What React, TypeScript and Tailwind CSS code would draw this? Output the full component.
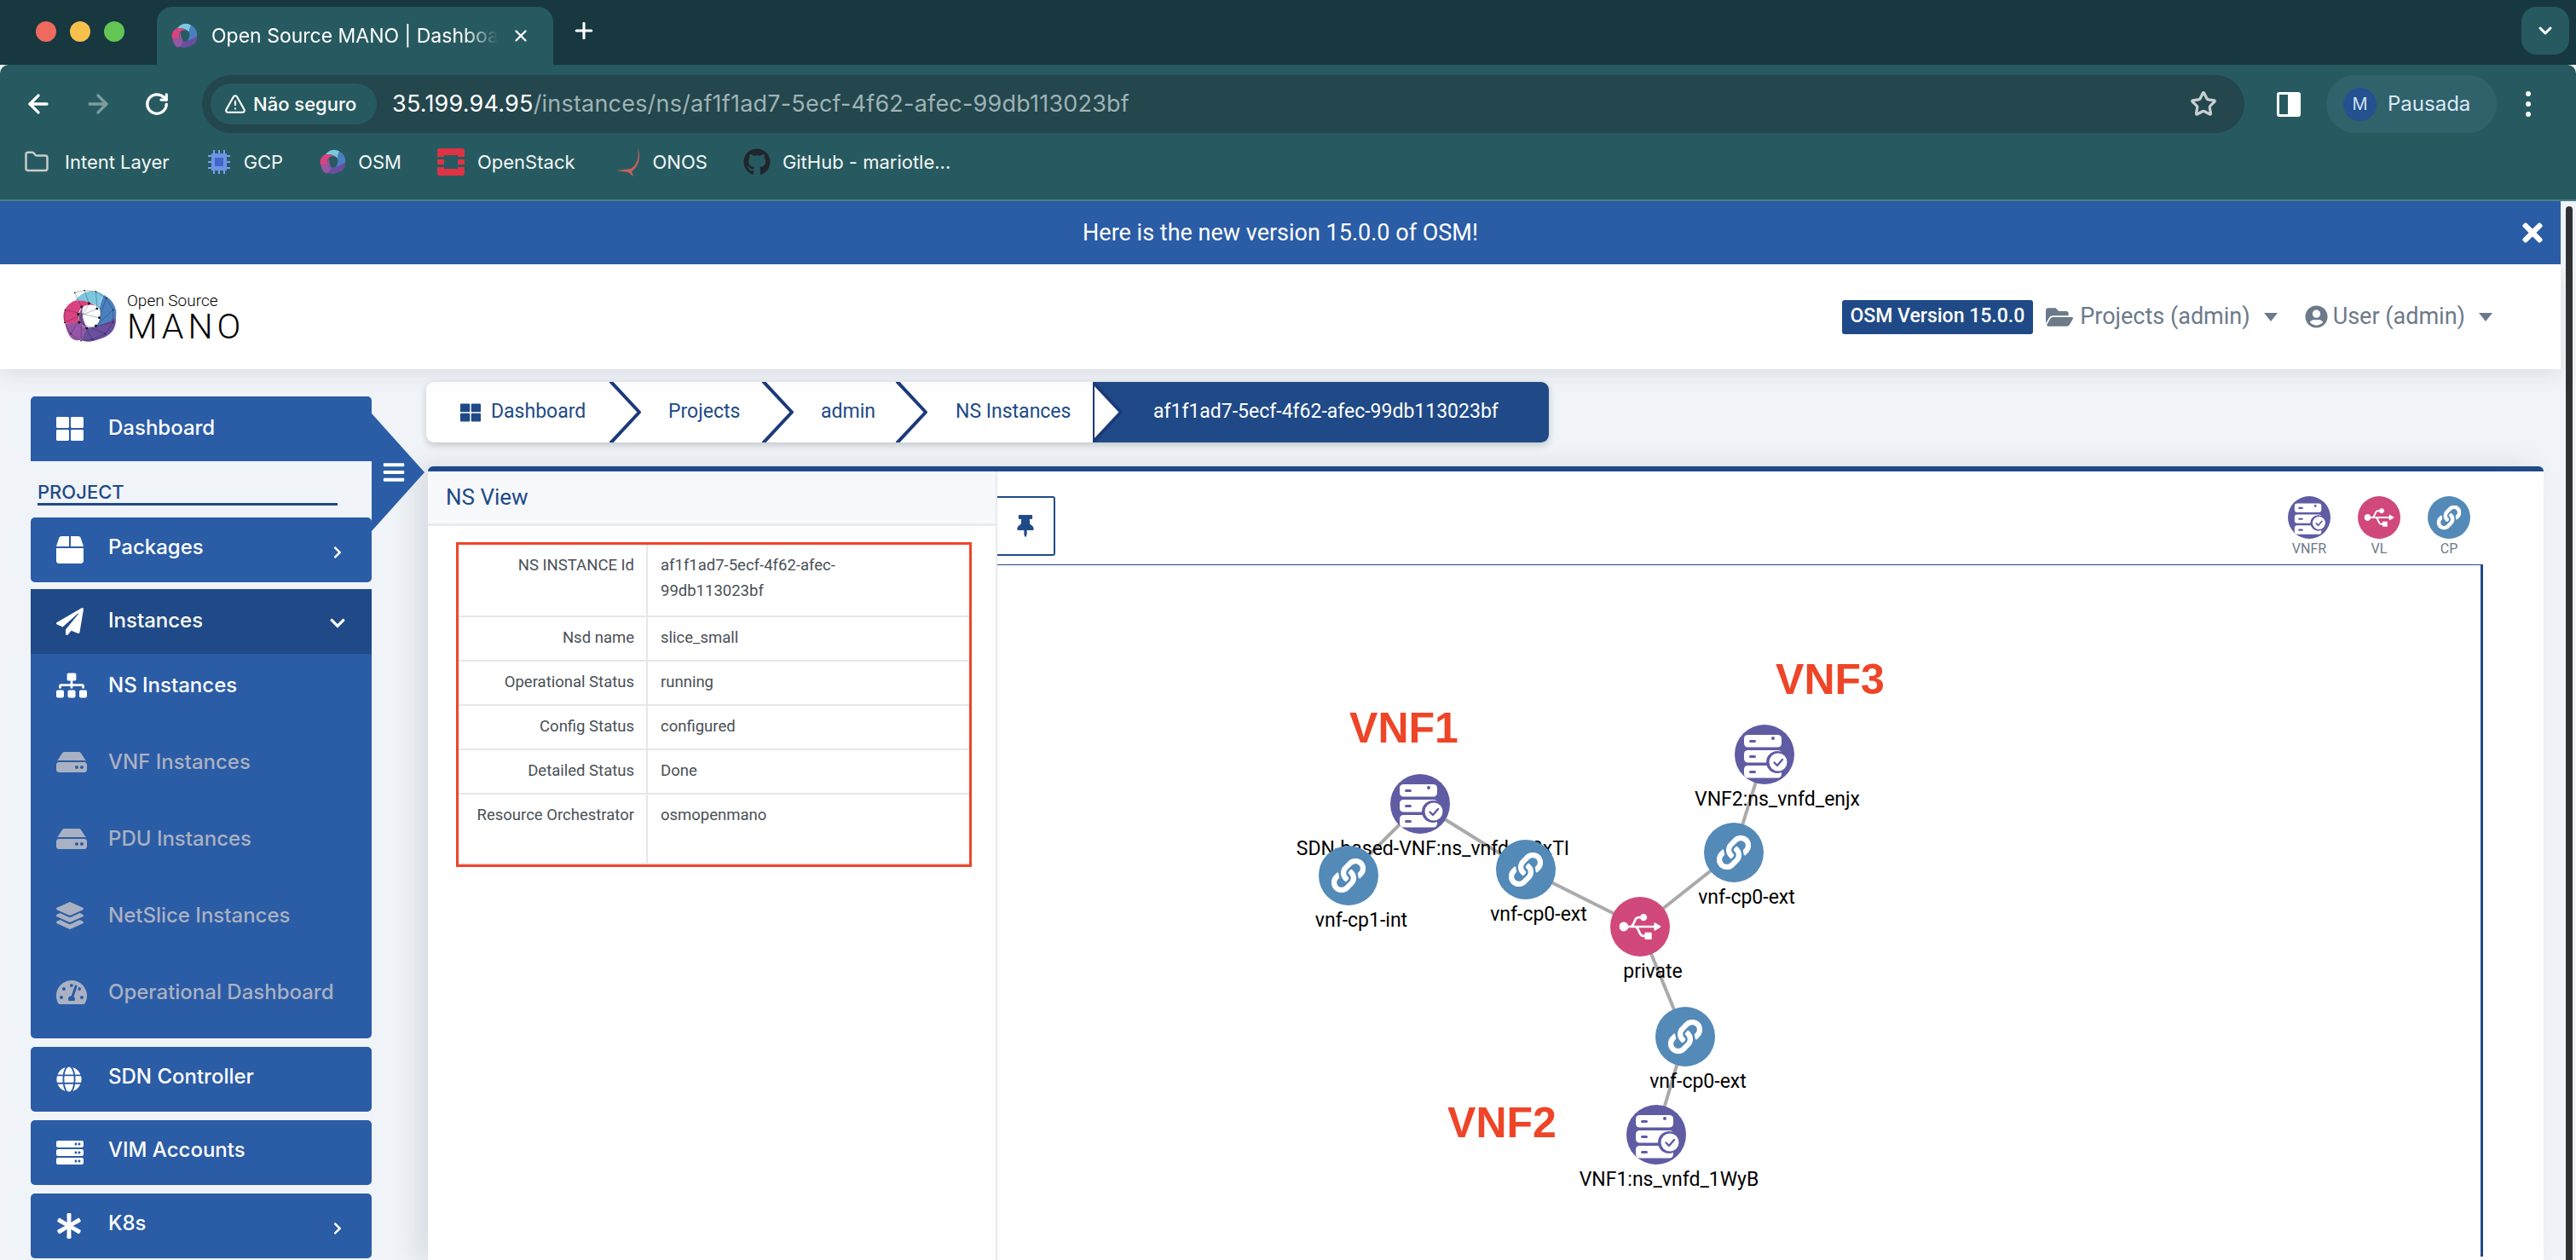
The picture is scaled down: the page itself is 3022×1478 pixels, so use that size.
import { ArrowLeft, ArrowRight, RotateCw, Star, Plus, X, ChevronDown, TriangleAlert, Folder } from 'lucide-react'
import {
  FaAsterisk,
  FaBars,
  FaBox,
  FaChevronDown,
  FaChevronRight,
  FaFolderOpen,
  FaGithub,
  FaGlobe,
  FaHdd,
  FaLayerGroup,
  FaLink,
  FaPaperPlane,
  FaServer,
  FaSitemap,
  FaTachometerAlt,
  FaThLarge,
  FaThumbtack,
  FaTimes,
  FaUsb,
  FaUserCircle,
} from 'react-icons/fa'

const ROBOTO = 'font-[Roboto,sans-serif]'

function OsmLogo({ size, mesh = true }: { size: number; mesh?: boolean }) {
  const pts = [
    [25, 8], [42, 4], [62, 6], [80, 18], [92, 38], [92, 60], [78, 80], [56, 90], [36, 92], [18, 80], [7, 60], [8, 38],
    [37, 33], [50, 27], [64, 36], [68, 52], [62, 66], [46, 70], [33, 60], [31, 46],
  ]
  return (
    <svg width={size} height={size} viewBox="0 0 100 100">
      <path d="M25 22 C38 4 62 0 76 12 C70 20 70 30 68 36 C60 26 44 20 25 22Z" fill="#7cc8e0" />
      <path d="M76 12 C92 20 100 36 97 52 C84 60 76 66 62 68 C70 56 72 46 68 36 C70 28 72 20 76 12Z" fill="#4a80c0" />
      <path d="M97 52 C98 72 88 84 66 90 C48 96 42 94 36 90 C40 82 42 76 46 70 C58 70 76 64 97 52Z" fill="#6a4f9f" />
      <path d="M36 90 C22 96 12 84 8 62 C18 62 26 60 33 58 C36 66 40 68 46 70 C42 78 40 84 36 90Z" fill="#9656a8" />
      <path d="M8 62 C0 44 10 28 25 22 C40 20 54 24 62 32 C50 26 38 30 32 42 C30 50 32 54 33 58 C24 62 16 62 8 62Z" fill="#d9437f" />
      <path d="M33 58 C30 46 34 38 40 34 C34 42 42 60 46 70 C40 68 36 64 33 58Z" fill="#8a5aa8" />
      {mesh && (
        <g stroke="#1d1d2b" strokeWidth="0.5" fill="none">
          <polyline points={pts.slice(0, 12).map(p => p.join(',')).join(' ')} />
          {pts.slice(0, 12).map((p, i) => (
            <line key={i} x1={p[0]} y1={p[1]} x2={pts[12 + (i % 8)][0]} y2={pts[12 + (i % 8)][1]} />
          ))}
        </g>
      )}
      {mesh && pts.map((p, i) => <circle key={i} cx={p[0]} cy={p[1]} r={i > 11 ? 2.2 : 1.2} fill="#111" />)}
    </svg>
  )
}

function ChromeBar() {
  return (
    <div className="flex flex-col font-[Inter,sans-serif] text-white">
      <div className="h-[76px] bg-[#18383f] flex items-start">
        <div className="flex items-center gap-[16px] pl-[42px] h-[74px] w-[184px]">
          <span className="w-[24px] h-[24px] rounded-full bg-[#f0695f]" />
          <span className="w-[24px] h-[24px] rounded-full bg-[#f7c04c]" />
          <span className="w-[24px] h-[24px] rounded-full bg-[#62c554]" />
        </div>
        <div className="mt-[8px] h-[68px] w-[465px] rounded-t-[18px] bg-[#275a60] flex items-center pl-[16px] pr-[18px] gap-[16px]">
          <OsmLogo size={32} mesh={false} />
          <span className="text-[23px] whitespace-nowrap overflow-hidden w-[336px] [mask-image:linear-gradient(to_right,black_88%,transparent)]">
            Open Source MANO | Dashboard
          </span>
          <X size={22} strokeWidth={2.5} />
        </div>
        <Plus size={30} strokeWidth={2.5} className="ml-[21px] mt-[21px]" />
        <div className="ml-auto mr-[8px] mt-[8px] w-[56px] h-[56px] rounded-[18px] bg-[#275a60] flex items-center justify-center">
          <ChevronDown size={24} strokeWidth={3} />
        </div>
      </div>
      <div className="h-[160px] bg-[#275a60] rounded-t-[10px] flex flex-col">
        <div className="h-[68px] mt-[12px] flex items-center pl-[28px] pr-[26px]">
          <ArrowLeft size={34} strokeWidth={2.4} />
          <ArrowRight size={34} strokeWidth={2.4} className="ml-[36px] text-[#7e9ca0]" />
          <RotateCw size={30} strokeWidth={2.6} className="ml-[37px]" />
          <div className="ml-[38px] h-[68px] w-[2396px] rounded-full bg-[#24464d] flex items-center pl-[10px] pr-[32px]">
            <div className="h-[48px] w-[195px] rounded-full bg-[#275a60] flex items-center pl-[16px] gap-[8px] shrink-0">
              <TriangleAlert size={26} strokeWidth={2} />
              <span className="text-[22px] font-medium whitespace-nowrap">Não seguro</span>
            </div>
            <span className="ml-[18px] text-[27px] tracking-[0.2px] whitespace-nowrap">
              35.199.94.95<span className="text-[#9db3b5]">/instances/ns/af1f1ad7-5ecf-4f62-afec-99db113023bf</span>
            </span>
            <Star size={32} strokeWidth={2.4} className="ml-auto text-[#c9cfd0]" />
          </div>
          <div className="ml-[38px] w-[28px] h-[29px] border-[3px] border-white rounded-[3px] flex justify-end">
            <span className="w-[12px] bg-white" />
          </div>
          <div className="ml-[30px] h-[68px] w-[200px] rounded-full bg-[#2f626b] flex items-center pl-[20px] gap-[13px]">
            <span className="w-[39px] h-[39px] rounded-full bg-[#24518f] flex items-center justify-center text-[20px] text-[#cfe0f5]">
              M
            </span>
            <span className="text-[24px] text-[#dce8f5]">Pausada</span>
          </div>
          <div className="ml-[34px] flex flex-col gap-[6px]">
            <span className="w-[6px] h-[6px] rounded-full bg-white" />
            <span className="w-[6px] h-[6px] rounded-full bg-white" />
            <span className="w-[6px] h-[6px] rounded-full bg-white" />
          </div>
        </div>
        <div className="flex-1 flex items-center pl-[28px] text-[22px] text-[#f2f6f6] pb-[10px]">
          <Folder size={30} strokeWidth={2} className="text-[#c8cccd]" />
          <span className="ml-[18px]">Intent Layer</span>
          <svg className="ml-[44px]" width="28" height="30" viewBox="0 0 28 30">
            <g stroke="#7aa0ee" strokeWidth="2">
              <path d="M8 1v28M14 1v28M20 1v28M1 8h26M1 15h26M1 22h26" />
            </g>
            <rect x="5" y="5" width="18" height="20" fill="#6e93e6" />
            <rect x="9" y="10" width="10" height="10" fill="#3f67c6" />
          </svg>
          <span className="ml-[15px]">GCP</span>
          <span className="ml-[42px] flex">
            <OsmLogo size={32} mesh={false} />
          </span>
          <span className="ml-[14px]">OSM</span>
          <svg className="ml-[42px]" width="32" height="32" viewBox="0 0 32 32">
            <path
              d="M3 0h26a3 3 0 0 1 3 3v7h-8V8H8v2H0V3a3 3 0 0 1 3-3ZM0 13h8v6H0ZM24 13h8v6h-8ZM0 22h8v2h16v-2h8v7a3 3 0 0 1-3 3H3a3 3 0 0 1-3-3Z"
              fill="#dd3344"
            />
          </svg>
          <span className="ml-[15px]">OpenStack</span>
          <svg className="ml-[47px]" width="34" height="34" viewBox="0 0 34 34">
            <path d="M26 0c2 10 0 20-8 25L1 27l14 2 6 5-2-6C28 22 30 10 26 0Z" fill="#c9605a" />
          </svg>
          <span className="ml-[10px]">ONOS</span>
          <FaGithub size={32} className="ml-[42px] text-[#20262c]" />
          <span className="ml-[14px]">GitHub - mariotle...</span>
        </div>
        <div className="h-[2px] bg-[#4b8087]" />
      </div>
    </div>
  )
}

function SideItem({ icon, label, chevron }: { icon: React.ReactNode; label: string; chevron?: boolean }) {
  return (
    <div className="h-[76px] rounded-[5px] bg-[#2b5ca6] flex items-center pl-[30px] pr-[32px] text-white">
      <span className="w-[61px] flex shrink-0">{icon}</span>
      <span className="text-[24px] font-medium leading-none pb-[6px]">{label}</span>
      {chevron && <FaChevronRight size={16} className="ml-auto mt-[6px]" />}
    </div>
  )
}

const SUB_ITEMS = [
  { label: 'NS Instances', icon: <FaSitemap size={36} />, on: true },
  { label: 'VNF Instances', icon: <FaHdd size={36} /> },
  { label: 'PDU Instances', icon: <FaHdd size={36} /> },
  { label: 'NetSlice Instances', icon: <FaLayerGroup size={32} /> },
  { label: 'Operational Dashboard', icon: <FaTachometerAlt size={36} /> },
]

function Sidebar() {
  return (
    <aside className="relative w-[400px] ml-[36px] pt-[32px] shrink-0 font-[Inter,sans-serif]">
      <div className="h-[76px] rounded-t-[5px] bg-[#2b5ca6] flex items-center pl-[30px] text-white">
        <span className="w-[61px] flex">
          <FaThLarge size={32} />
        </span>
        <span className="text-[24px] font-medium leading-none pb-[2px]">Dashboard</span>
      </div>
      <div className="h-[66px] relative">
        <div className="ml-[8px] w-[352px] h-[52px] border-b-[3px] border-[#204a87] flex items-end text-[22px] leading-[26px] text-[#204a87] font-medium">
          PROJECT
        </div>
      </div>
      <SideItem icon={<FaBox size={32} />} label="Packages" chevron />
      <div className="mt-[8px] rounded-b-[5px] bg-[#2b5ca6] h-[527px]">
        <div className="h-[76px] bg-[#204a87] flex items-center pl-[30px] pr-[30px] text-white">
          <span className="w-[61px] flex">
            <FaPaperPlane size={32} />
          </span>
          <span className="text-[24px] font-medium leading-none pb-[2px]">Instances</span>
          <FaChevronDown size={20} className="ml-auto mt-[4px]" />
        </div>
        <div className="flex flex-col">
          {SUB_ITEMS.map(item => (
            <div
              key={item.label}
              className={`h-[90px] flex items-center pl-[30px] ${item.on ? 'text-white -mt-[8px]' : 'text-[#a9b1c2]'}`}
            >
              <span className="w-[61px] flex">{item.icon}</span>
              <span className="text-[24px] font-medium whitespace-nowrap">{item.label}</span>
            </div>
          ))}
        </div>
      </div>
      <div className="mt-[10px] flex flex-col gap-[10px]">
        <SideItem icon={<FaGlobe size={30} />} label="SDN Controller" />
        <SideItem icon={<FaServer size={32} />} label="VIM Accounts" />
        <SideItem icon={<FaAsterisk size={30} />} label="K8s" chevron />
      </div>
      {/* toggle tab that sticks out of the dashboard row */}
      <div className="absolute left-[400px] top-[52px] w-[62px] h-[138px] bg-[#2b5ca6] [clip-path:polygon(0_0,100%_50%,0_100%)] flex items-center justify-center text-white">
        <FaBars size={28} className="-ml-[10px]" />
      </div>
    </aside>
  )
}

function Crumb({ width }: { width: number }) {
  return (
    <svg width={width} height="71" viewBox={`0 0 ${width} 71`} className="shrink-0">
      <path d={`M0 -2 L${width - 3} 35.5 L0 73`} fill="none" stroke="#1c3a7a" strokeWidth="4" strokeLinejoin="round" />
    </svg>
  )
}

function Breadcrumb() {
  return (
    <div className={`h-[71px] w-[1317px] ml-[0px] flex items-center rounded-[9px] bg-white shadow-[0_3px_8px_rgba(0,0,0,0.2)] text-[23px] text-[#204a87] overflow-hidden ${ROBOTO}`}>
      <div className="ml-[40px] flex items-center gap-[12px] w-[175px]">
        <FaThLarge size={24} />
        <span>Dashboard</span>
      </div>
      <Crumb width={38} />
      <span className="ml-[31px] w-[110px]">Projects</span>
      <Crumb width={38} />
      <span className="ml-[31px] w-[88px]">admin</span>
      <Crumb width={38} />
      <span className="ml-[32px] w-[162px] whitespace-nowrap">NS Instances</span>
      <div className="relative flex-1 h-full bg-[#204a87] text-white flex items-center pl-[71px] whitespace-nowrap -ml-[1px]">
        <svg width="38" height="71" viewBox="0 0 38 71" className="absolute left-0 top-0">
          <path d="M0 0 L33 35.5 L0 71Z" fill="#fff" stroke="#1c3a7a" strokeWidth="4" strokeLinejoin="round" />
        </svg>
        af1f1ad7-5ecf-4f62-afec-99db113023bf
      </div>
    </div>
  )
}

const ROWS = [
  { key: 'NS INSTANCE Id', value: 'af1f1ad7-5ecf-4f62-afec-99db113023bf', h: 'h-[85px]' },
  { key: 'Nsd name', value: 'slice_small', h: 'h-[52px]' },
  { key: 'Operational Status', value: 'running', h: 'h-[52px]' },
  { key: 'Config Status', value: 'configured', h: 'h-[52px]' },
  { key: 'Detailed Status', value: 'Done', h: 'h-[52px]' },
  { key: 'Resource Orchestrator', value: 'osmopenmano', h: 'h-[82px]' },
]

function NsPanel() {
  return (
    <div className="w-[668px] shrink-0 border-r-2 border-[#e8ebef] bg-white flex flex-col">
      <div className="h-[64px] bg-[#f7f8fa] border-b-[3px] border-[#e8ebef] flex items-center pl-[21px] text-[26px] text-[#204a87]">
        NS View
      </div>
      <div className="pl-[33px] pt-[19px]">
        <div className="w-[605px] h-[381px] border-[3px] border-[#ee4528] text-[18.5px] leading-[30px] text-[#495057]">
          {ROWS.map(row => (
            <div key={row.key} className={`flex border-b-[2px] border-[#e5e7ea] ${row.h}`}>
              <div className="w-[222px] pr-[14px] pt-[9px] text-right border-r-[2px] border-[#e5e7ea]">{row.key}</div>
              <div className="flex-1 pl-[15px] pr-[70px] pt-[9px]">{row.value}</div>
            </div>
          ))}
        </div>
      </div>
    </div>
  )
}

const OX = 1170
const OY = 665

const NODES = [
  { id: 'vnf1', kind: 'vnfr', x: 1666, y: 945, label: 'SDN-based-VNF:ns_vnfd_H2xTI' },
  { id: 'cp1', kind: 'cp', x: 1582, y: 1029, label: 'vnf-cp1-int' },
  { id: 'cp2', kind: 'cp', x: 1790, y: 1022, label: 'vnf-cp0-ext' },
  { id: 'vl', kind: 'vl', x: 1924, y: 1089, label: 'private' },
  { id: 'vnf3', kind: 'vnfr', x: 2070, y: 887, label: 'VNF2:ns_vnfd_enjx' },
  { id: 'cp3', kind: 'cp', x: 2034, y: 1002, label: 'vnf-cp0-ext' },
  { id: 'cp4', kind: 'cp', x: 1977, y: 1218, label: 'vnf-cp0-ext' },
  { id: 'vnf2', kind: 'vnfr', x: 1943, y: 1333, label: 'VNF1:ns_vnfd_1WyB' },
]

const LINKS = [
  ['vnf1', 'cp1'],
  ['vnf1', 'cp2'],
  ['cp2', 'vl'],
  ['vl', 'cp3'],
  ['cp3', 'vnf3'],
  ['vl', 'cp4'],
  ['cp4', 'vnf2'],
]

const NOTES = [
  { text: 'VNF1', x: 1647, y: 873 },
  { text: 'VNF3', x: 2147, y: 816 },
  { text: 'VNF2', x: 1762, y: 1336 },
]

function ServerCheck({ cx, cy, r }: { cx: number; cy: number; r: number }) {
  const s = r / 35
  return (
    <g transform={`translate(${cx} ${cy}) scale(${s})`}>
      <circle r="35" fill="#5f5ca3" />
      {[-23, -5, 13].map(y => (
        <g key={y}>
          <rect x="-24" y={y} width="44" height="14.5" rx="4.5" fill="#fff" />
          <rect x="-18" y={y + 6} width="8" height="3" rx="1.5" fill="#5f5ca3" />
        </g>
      ))}
      <circle cx="10" cy="-19" r="2" fill="#5f5ca3" />
      <circle cx="15" cy="9" r="13" fill="#5f5ca3" />
      <circle cx="16" cy="9" r="10.5" fill="#fff" />
      <path d="M11.5 9.5l3.5 3.5 6-7" fill="none" stroke="#5f5ca3" strokeWidth="2.4" strokeLinecap="round" strokeLinejoin="round" />
    </g>
  )
}

function GraphNode({ kind, cx, cy, r }: { kind: string; cx: number; cy: number; r: number }) {
  if (kind === 'vnfr') return <ServerCheck cx={cx} cy={cy} r={r} />
  if (kind === 'vl') {
    const size = r * 1.4
    return (
      <g>
        <circle cx={cx} cy={cy} r={r} fill="#d1487c" />
        <FaUsb x={cx - size / 2} y={cy - size / 2} size={size} color="#fff" />
      </g>
    )
  }
  const size = r * 1.15
  return (
    <g>
      <circle cx={cx} cy={cy} r={r} fill="#538ab8" />
      <FaLink x={cx - size / 2} y={cy - size / 2} size={size} color="#fff" />
    </g>
  )
}

function NetworkGraph() {
  const at = (id: string) => NODES.find(n => n.id === id)!
  return (
    <svg width="1741" height="813" className={`block ${ROBOTO}`}>
      {LINKS.map(([a, b]) => (
        <line
          key={a + b}
          x1={at(a).x - OX}
          y1={at(a).y - OY}
          x2={at(b).x - OX}
          y2={at(b).y - OY}
          stroke="#aaaaaa"
          strokeWidth="4"
        />
      ))}
      {NOTES.map(n => (
        <text key={n.text} x={n.x - OX} y={n.y - OY} textAnchor="middle" fill="#ee4528" className="font-[Liberation_Sans,sans-serif] font-bold text-[50px]">
          {n.text}
        </text>
      ))}
      {NODES.map(n => (
        <g key={n.id}>
          <GraphNode kind={n.kind} cx={n.x - OX} cy={n.y - OY} r={35} />
          <text x={n.x + 15 - OX} y={n.y + 60 - OY} textAnchor="middle" fill="#000" className="text-[23px]">
            {n.label}
          </text>
        </g>
      ))}
    </svg>
  )
}

function MainCard() {
  return (
    <div className="ml-[2px] mt-[28px] flex-1 flex flex-col min-h-0 mr-[20px] rounded-t-[6px] border-t-[6px] border-[#204a87] bg-white shadow-[-14px_0_30px_rgba(90,100,120,0.16)]">
      <div className={`flex flex-1 min-h-0 ${ROBOTO}`}>
        <NsPanel />
        <div className="flex-1 flex flex-col pt-[29px] min-w-0">
          <div className="h-[80px] flex items-start">
            <div className="w-[68px] h-[70px] border-[2px] border-l-0 border-[#204a87] rounded-r-[3px] flex items-center justify-center text-[#204a87]">
              <FaThumbtack size={26} />
            </div>
            <div className="ml-auto mr-[86px] -mt-[0px] flex gap-[32px] text-[16px] text-[#6c7a8a] text-center">
              <div className="w-[50px] flex flex-col items-center">
                <svg width="50" height="50">
                  <ServerCheck cx={25} cy={25} r={25} />
                </svg>
                <span className="leading-[22px] mt-[1px]">VNFR</span>
              </div>
              <div className="w-[50px] flex flex-col items-center">
                <svg width="50" height="50">
                  <GraphNode kind="vl" cx={25} cy={25} r={25} />
                </svg>
                <span className="leading-[22px] mt-[1px]">VL</span>
              </div>
              <div className="w-[50px] flex flex-col items-center">
                <svg width="50" height="50">
                  <GraphNode kind="cp" cx={25} cy={25} r={25} />
                </svg>
                <span className="leading-[22px] mt-[1px]">CP</span>
              </div>
            </div>
          </div>
          <div className="flex-1 min-h-0 overflow-hidden">
            <div className="w-[1743px] h-[813px] border-t-[2px] border-r-[3px] border-[#204a87] -mt-[1px]">
              <NetworkGraph />
            </div>
          </div>
        </div>
      </div>
    </div>
  )
}

export default function App() {
  return (
    <div className="w-[3022px] h-[1478px] overflow-hidden flex flex-col bg-[#f0f4f8]">
      <ChromeBar />
      <div className="flex-1 min-h-0 flex">
        <div className="w-[3004px] flex flex-col min-h-0">
          <div className={`h-[74px] bg-[#2b5ca6] relative flex items-center justify-center text-white text-[27px] ${ROBOTO}`}>
            Here is the new version 15.0.0 of OSM!
            <FaTimes size={34} className="absolute right-[16px] top-[20px]" />
          </div>
          <header className={`h-[123px] bg-white flex items-center shadow-[0_8px_20px_rgba(90,100,120,0.12)] relative z-10 ${ROBOTO}`}>
            <div className="ml-[71px] flex items-center gap-[11px]">
              <OsmLogo size={67} />
              <div className="flex flex-col text-black font-light">
                <span className="text-[19px] leading-[22px]">Open Source</span>
                <span className="text-[41px] leading-[38px] tracking-[5px]">MANO</span>
              </div>
            </div>
            <div className="ml-auto flex items-center text-[27px] text-[#6c7a8a] pr-[80px]">
              <span className="h-[40px] px-[10px] bg-[#204a87] text-white rounded-[3px] text-[23px] font-medium flex items-center">
                OSM Version 15.0.0
              </span>
              <FaFolderOpen size={32} className="ml-[15px]" />
              <span className="ml-[8px]">Projects (admin)</span>
              <span className="ml-[16px] border-x-[8px] border-x-transparent border-t-[10px] border-t-[#6c7a8a]" />
              <FaUserCircle size={27} className="ml-[32px]" />
              <span className="ml-[6px]">User (admin)</span>
              <span className="ml-[16px] border-x-[8px] border-x-transparent border-t-[10px] border-t-[#6c7a8a]" />
            </div>
          </header>
          <div className="flex-1 min-h-0 flex">
            <Sidebar />
            <div className="flex-1 min-w-0 pl-[64px] pt-[15px] flex flex-col">
              <Breadcrumb />
              <MainCard />
            </div>
          </div>
        </div>
        <div className="flex-1 pl-[6px] pt-[6px]">
          <div className="w-[8px] h-full rounded-t-full bg-[#2f3133]" />
        </div>
      </div>
    </div>
  )
}
